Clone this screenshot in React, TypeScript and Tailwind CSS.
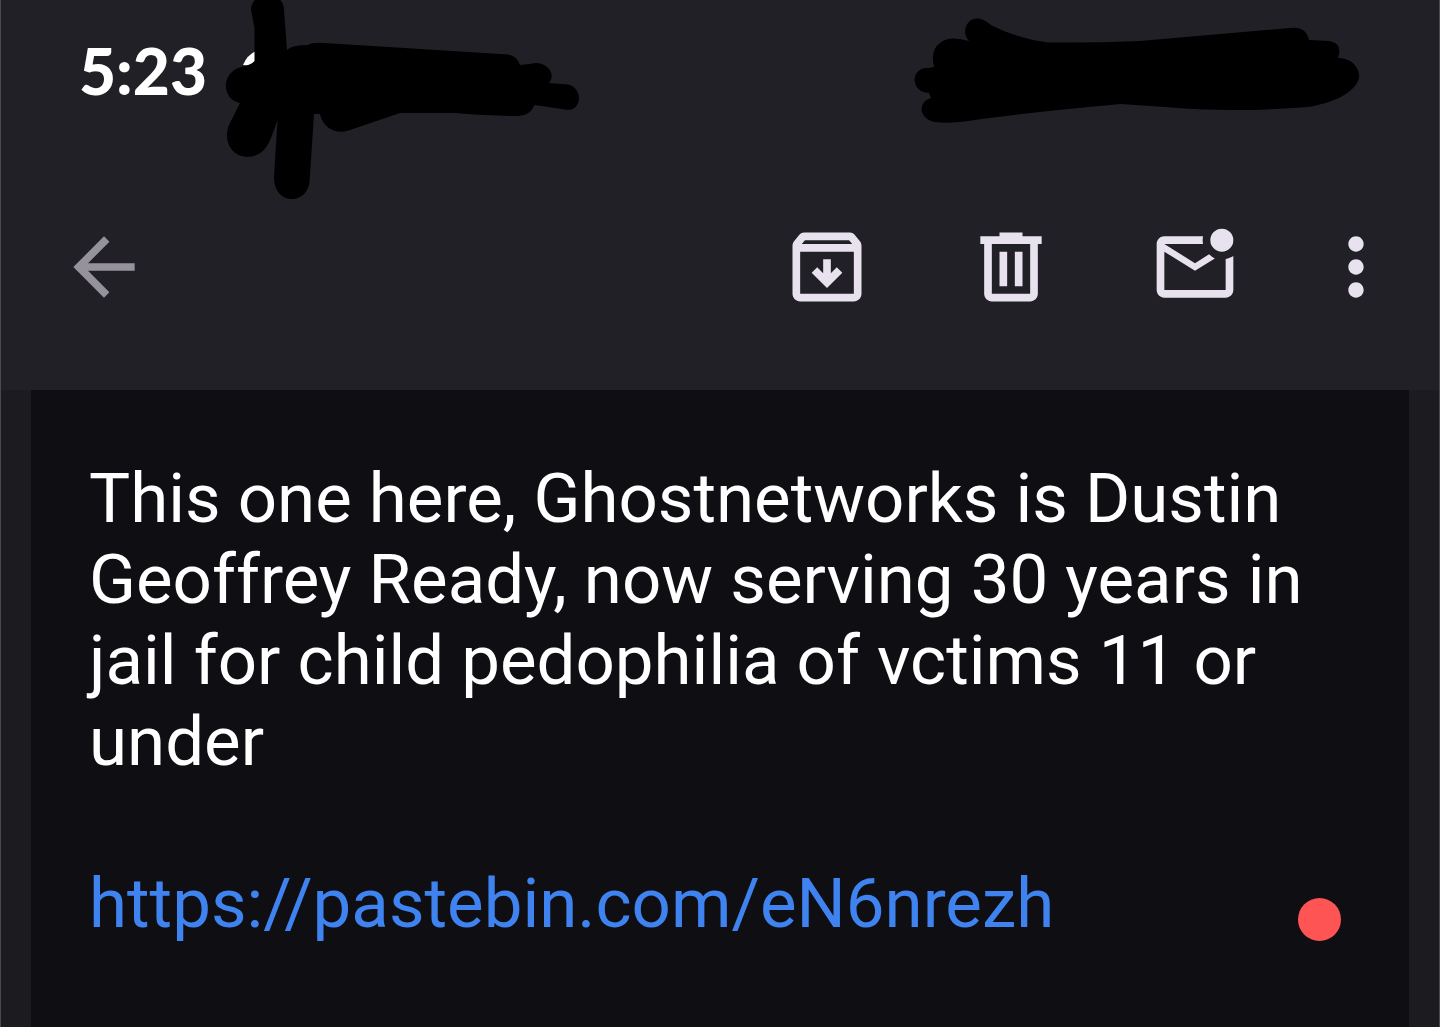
import React from "react";

type IconProps = {
  path: string;
};

const icons = {
  back: "M20 11H7.83l5.59-5.59L12 4l-8 8 8 8 1.41-1.41L7.83 13H20v-2z",
  archive:
    "M20.54 5.23l-1.39-1.68C18.88 3.21 18.47 3 18 3H6c-.47 0-.88.21-1.16.55L3.46 5.23C3.17 5.57 3 6.02 3 6.5V19c0 1.1.9 2 2 2h14c1.1 0 2-.9 2-2V6.5c0-.48-.17-.93-.46-1.27zM6.24 5h11.52l.83 1H5.42l.82-1zM5 19V8h14v11H5zM11 10h2v3.6l1.55-1.55L16 13.5l-4 4-4-4 1.45-1.45L11 13.6z",
  trash:
    "M9 3v1H4v2h1v13c0 1.1.9 2 2 2h10c1.1 0 2-.9 2-2V6h1V4h-5V3H9zM7 6h10v13H7V6zm2 2v9h2V8H9zm4 0v9h2V8h-2z",
  unread:
    "M22 9.1V18c0 1.1-.9 2-2 2H4c-1.1 0-2-.9-2-2V6c0-1.1.9-2 2-2h10.1a5 5 0 0 0 0 2H4l8 5 3.67-2.3a5 5 0 0 0 1.5 1.05L12 13 4 8v10h16V9.9c.74-.15 1.42-.45 2-.8zM16 5a3 3 0 1 0 6 0 3 3 0 1 0-6 0z",
  more: "M12 8c1.1 0 2-.9 2-2s-.9-2-2-2-2 .9-2 2 .9 2 2 2zm0 2c-1.1 0-2 .9-2 2s.9 2 2 2 2-.9 2-2-.9-2-2-2zm0 6c-1.1 0-2 .9-2 2s.9 2 2 2 2-.9 2-2-.9-2-2-2z",
};

const Icon = ({ path }: IconProps) => (
  <svg viewBox="0 0 24 24" className="size-[92px]" fill="currentColor" aria-hidden="true">
    <path fillRule="evenodd" d={path} />
  </svg>
);

const StatusBar = () => {
  return (
    <div className="relative h-[221px] px-[78px] pt-[31px]">
      <time className="block font-['Lato','Open_Sans',sans-serif] text-[64px] leading-20 font-black text-white">
        5:23
      </time>
      <svg
        className="absolute top-0 left-[219px] h-[204px] w-[364px]"
        viewBox="220 0 364 204"
        aria-hidden="true"
      >
        <path d="M243 65Q247 55 256 51V66z" fill="#fff" />
        <path d="M251 10C251-10 284-10 284 10L287 50Q292 45 308 45Q312 42 325 43L508 54.500Q517 56 520 65L530 64C543 59 558 72 549 83L568 84.500C584 88 582 113 565 109.500L534.500 105Q530 116 518 116Q490 116 455 113H400L350 130C335 136 322 126 320 114H314L309.500 182C307 205 274 206 274 177L277.500 120C270 141 267 156 247 157C231 156 223 141 229 125L240 103C222 100 220 73 241 67Q251 65 254.500 61V28z" />
      </svg>
      <svg
        className="absolute top-0 right-[75px] h-[128px] w-[454px]"
        viewBox="910 0 454 128"
        aria-hidden="true"
      >
        <path d="M969 41C961 33 966 18 978 18.500Q984 19 991 25Q1015 38 1048 42.500Q1094 43 1140 41L1290 28Q1306 26 1309 40L1330 41Q1343 44 1338 58C1353 58 1360 69 1359 78C1355 93 1333 103 1308 107Q1230 113 1165 107L1121 104Q1020 113 960 122Q945 123.500 935 122C920 120 916 103 931 98L929 93C910 93 910 67 928 68L934 67Q930 50 940 43Q949 35 969 41z" />
      </svg>
    </div>
  );
};

const Toolbar = () => {
  return (
    <nav className="flex items-center pr-[37px] pl-[57px] text-[#e8e2ef]">
      <button type="button" aria-label="Back" className="text-[#96929c]">
        <Icon path={icons.back} />
      </button>
      <div className="ml-auto flex items-center gap-[92px]">
        <button type="button" aria-label="Archive">
          <Icon path={icons.archive} />
        </button>
        <button type="button" aria-label="Delete">
          <Icon path={icons.trash} />
        </button>
        <button type="button" aria-label="Mark as unread">
          <Icon path={icons.unread} />
        </button>
      </div>
      <button type="button" aria-label="More options" className="ml-[69px]">
        <Icon path={icons.more} />
      </button>
    </nav>
  );
};

export default function App() {
  return (
    <div className="flex min-h-screen flex-col border-x border-[#4b4a50] bg-[#1c1b20] font-['Roboto',sans-serif]">
      <header className="bg-[#212026] pb-[77px]">
        <StatusBar />
        <Toolbar />
      </header>
      <main className="relative mx-[30px] flex-1 bg-[#0f0e13] px-[58px] pt-[68px] text-[69px] leading-[81px] text-white">
        <p>
          This one here, Ghostnetworks is Dustin Geoffrey Ready, now serving 30 years in jail for
          child pedophilia of vctims 11 or under
        </p>
        <p className="mt-[81px]">
          <a href="#" className="text-[#3f83f0]">
            https://pastebin.com/eN6nrezh
          </a>
        </p>
        <span className="absolute right-[68px] bottom-[86px] size-[43px] rounded-full bg-[#ff5454]" />
      </main>
    </div>
  );
}
